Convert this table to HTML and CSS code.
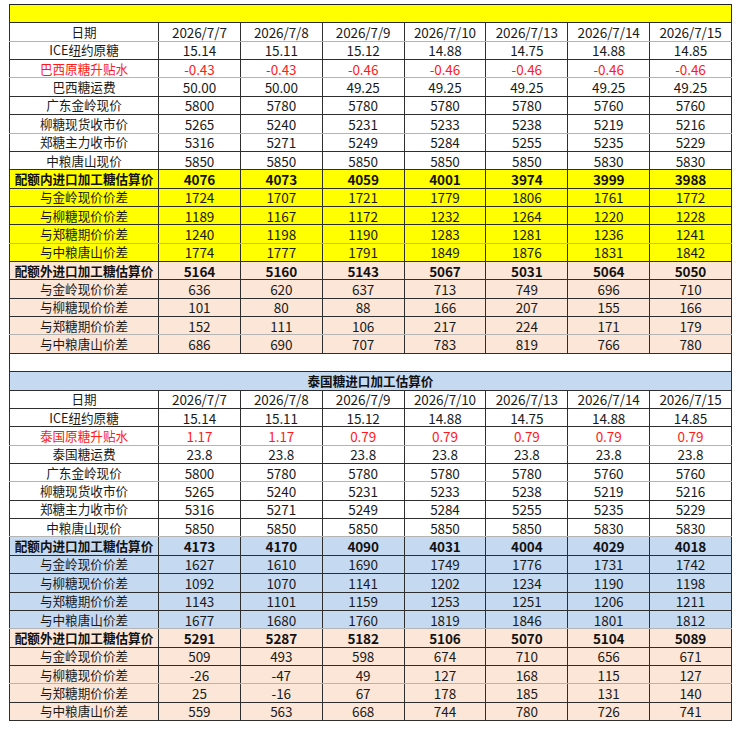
FILE: index.html
```html
<!DOCTYPE html>
<html lang="zh">
<head>
<meta charset="utf-8">
<title>进口加工糖估算价</title>
<link rel="stylesheet" href="styles.css">
</head>
<body>
<table class="sheet">
<colgroup>
<col class="c-label"><col class="c-val"><col class="c-val"><col class="c-val"><col class="c-val"><col class="c-val"><col class="c-val"><col class="c-val">
</colgroup>
<tbody>
<tr class="title yellow dk"><td colspan="8"></td></tr>
<tr class="lt"><td>日期</td><td>2026/7/7</td><td>2026/7/8</td><td>2026/7/9</td><td>2026/7/10</td><td>2026/7/13</td><td>2026/7/14</td><td>2026/7/15</td></tr>
<tr class="dk"><td>ICE纽约原糖</td><td>15.14</td><td>15.11</td><td>15.12</td><td>14.88</td><td>14.75</td><td>14.88</td><td>14.85</td></tr>
<tr class="lt red"><td>巴西原糖升贴水</td><td>-0.43</td><td>-0.43</td><td>-0.46</td><td>-0.46</td><td>-0.46</td><td>-0.46</td><td>-0.46</td></tr>
<tr class="dk"><td>巴西糖运费</td><td>50.00</td><td>50.00</td><td>49.25</td><td>49.25</td><td>49.25</td><td>49.25</td><td>49.25</td></tr>
<tr class="dk"><td>广东金岭现价</td><td>5800</td><td>5780</td><td>5780</td><td>5780</td><td>5780</td><td>5760</td><td>5760</td></tr>
<tr class="lt"><td>柳糖现货收市价</td><td>5265</td><td>5240</td><td>5231</td><td>5233</td><td>5238</td><td>5219</td><td>5216</td></tr>
<tr class="dk"><td>郑糖主力收市价</td><td>5316</td><td>5271</td><td>5249</td><td>5284</td><td>5255</td><td>5235</td><td>5229</td></tr>
<tr class="dk"><td>中粮唐山现价</td><td>5850</td><td>5850</td><td>5850</td><td>5850</td><td>5850</td><td>5830</td><td>5830</td></tr>
<tr class="dk yellow bold"><td>配额内进口加工糖估算价</td><td>4076</td><td>4073</td><td>4059</td><td>4001</td><td>3974</td><td>3999</td><td>3988</td></tr>
<tr class="dk yellow"><td>与金岭现价价差</td><td>1724</td><td>1707</td><td>1721</td><td>1779</td><td>1806</td><td>1761</td><td>1772</td></tr>
<tr class="dk yellow"><td>与柳糖现价价差</td><td>1189</td><td>1167</td><td>1172</td><td>1232</td><td>1264</td><td>1220</td><td>1228</td></tr>
<tr class="lt yellow"><td>与郑糖期价价差</td><td>1240</td><td>1198</td><td>1190</td><td>1283</td><td>1281</td><td>1236</td><td>1241</td></tr>
<tr class="dk yellow"><td>与中粮唐山价差</td><td>1774</td><td>1777</td><td>1791</td><td>1849</td><td>1876</td><td>1831</td><td>1842</td></tr>
<tr class="dk peach bold"><td>配额外进口加工糖估算价</td><td>5164</td><td>5160</td><td>5143</td><td>5067</td><td>5031</td><td>5064</td><td>5050</td></tr>
<tr class="dk peach"><td>与金岭现价价差</td><td>636</td><td>620</td><td>637</td><td>713</td><td>749</td><td>696</td><td>710</td></tr>
<tr class="dk peach"><td>与柳糖现价价差</td><td>101</td><td>80</td><td>88</td><td>166</td><td>207</td><td>155</td><td>166</td></tr>
<tr class="lt peach"><td>与郑糖期价价差</td><td>152</td><td>111</td><td>106</td><td>217</td><td>224</td><td>171</td><td>179</td></tr>
<tr class="dk peach"><td>与中粮唐山价差</td><td>686</td><td>690</td><td>707</td><td>783</td><td>819</td><td>766</td><td>780</td></tr>
<tr class="blank dk"><td colspan="8"></td></tr>
<tr class="title blue dk"><td colspan="8">泰国糖进口加工估算价</td></tr>
<tr class="dk"><td>日期</td><td>2026/7/7</td><td>2026/7/8</td><td>2026/7/9</td><td>2026/7/10</td><td>2026/7/13</td><td>2026/7/14</td><td>2026/7/15</td></tr>
<tr class="dk"><td>ICE纽约原糖</td><td>15.14</td><td>15.11</td><td>15.12</td><td>14.88</td><td>14.75</td><td>14.88</td><td>14.85</td></tr>
<tr class="lt red"><td>泰国原糖升贴水</td><td>1.17</td><td>1.17</td><td>0.79</td><td>0.79</td><td>0.79</td><td>0.79</td><td>0.79</td></tr>
<tr class="dk"><td>泰国糖运费</td><td>23.8</td><td>23.8</td><td>23.8</td><td>23.8</td><td>23.8</td><td>23.8</td><td>23.8</td></tr>
<tr class="lt"><td>广东金岭现价</td><td>5800</td><td>5780</td><td>5780</td><td>5780</td><td>5780</td><td>5760</td><td>5760</td></tr>
<tr class="dk"><td>柳糖现货收市价</td><td>5265</td><td>5240</td><td>5231</td><td>5233</td><td>5238</td><td>5219</td><td>5216</td></tr>
<tr class="dk"><td>郑糖主力收市价</td><td>5316</td><td>5271</td><td>5249</td><td>5284</td><td>5255</td><td>5235</td><td>5229</td></tr>
<tr class="lt"><td>中粮唐山现价</td><td>5850</td><td>5850</td><td>5850</td><td>5850</td><td>5850</td><td>5830</td><td>5830</td></tr>
<tr class="dk blue bold"><td>配额内进口加工糖估算价</td><td>4173</td><td>4170</td><td>4090</td><td>4031</td><td>4004</td><td>4029</td><td>4018</td></tr>
<tr class="dk blue"><td>与金岭现价价差</td><td>1627</td><td>1610</td><td>1690</td><td>1749</td><td>1776</td><td>1731</td><td>1742</td></tr>
<tr class="dk blue"><td>与柳糖现价价差</td><td>1092</td><td>1070</td><td>1141</td><td>1202</td><td>1234</td><td>1190</td><td>1198</td></tr>
<tr class="dk blue"><td>与郑糖期价价差</td><td>1143</td><td>1101</td><td>1159</td><td>1253</td><td>1251</td><td>1206</td><td>1211</td></tr>
<tr class="lt blue"><td>与中粮唐山价差</td><td>1677</td><td>1680</td><td>1760</td><td>1819</td><td>1846</td><td>1801</td><td>1812</td></tr>
<tr class="dk peach bold"><td>配额外进口加工糖估算价</td><td>5291</td><td>5287</td><td>5182</td><td>5106</td><td>5070</td><td>5104</td><td>5089</td></tr>
<tr class="dk peach"><td>与金岭现价价差</td><td>509</td><td>493</td><td>598</td><td>674</td><td>710</td><td>656</td><td>671</td></tr>
<tr class="lt peach"><td>与柳糖现价价差</td><td>-26</td><td>-47</td><td>49</td><td>127</td><td>168</td><td>115</td><td>127</td></tr>
<tr class="dk peach"><td>与郑糖期价价差</td><td>25</td><td>-16</td><td>67</td><td>178</td><td>185</td><td>131</td><td>140</td></tr>
<tr class="dk peach"><td>与中粮唐山价差</td><td>559</td><td>563</td><td>668</td><td>744</td><td>780</td><td>726</td><td>741</td></tr>
</tbody>
</table>
</body>
</html>
```

FILE: styles.css
```css
html, body {
  margin: 0;
  padding: 0;
  background: #ffffff;
}

body {
  padding: 4px 0 0 9px;
  font-family: "Noto Sans CJK SC", "Noto Sans", sans-serif;
  font-size: 13.5px;
  color: #1a1a1a;
}

.sheet {
  border-collapse: collapse;
  table-layout: fixed;
  width: 722px;
  border: 1px solid #222222;
}

.c-label { width: 149px; }
.c-val { width: 81.85px; }

.sheet td {
  height: 18.37px;
  padding: 0;
  box-sizing: border-box;
  line-height: 16px;
  text-align: center;
  white-space: nowrap;
  overflow: visible;
  letter-spacing: -0.1px;
  border-left: 1px solid #2e2e2e;
  border-right: 1px solid #2e2e2e;
}

.sheet td:first-child {
  font-size: 12.6px;
  letter-spacing: 0;
}

.sheet td:nth-child(8) {
  border-left-color: #a8a8a8;
}

.sheet tr.dk td { border-bottom: 1px solid #2e2e2e; }
.sheet tr.lt td { border-bottom: 1px solid #b4b4b4; }

.sheet tr.red td { color: #ff1a1a; }

.sheet tr.bold td {
  font-weight: 700;
  color: #111111;
}

.yellow td { background: #ffff00; }
.blue td { background: #c5d9f1; }
.peach td { background: #fce6d8; }

.sheet tr.title td {
  font-size: 12.6px;
  font-weight: 700;
  color: #111111;
}

.sheet tr.blank td {
  background: #ffffff;
}
```
